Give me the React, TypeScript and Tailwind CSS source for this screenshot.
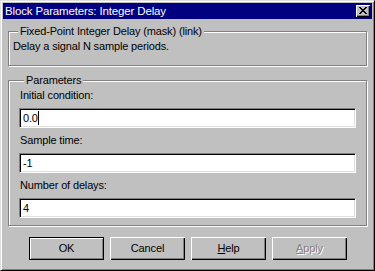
import React from 'react'

const font = "font-['Liberation_Sans',Arial,sans-serif]"

const GroupBox = ({ label, className, children }: { label: string; className?: string; children: React.ReactNode }) => (
  <fieldset
    className={`border border-[#808080] shadow-[inset_1px_1px_0_#fff,1px_1px_0_#fff] ${className ?? ''}`}
  >
    <legend className="ml-[5px] px-[2px] h-[14px] leading-[14px] bg-[#c0c0c0]">{label}</legend>
    {children}
  </fieldset>
)

const Field = ({ label, value, caret }: { label: string; value: string; caret?: boolean }) => (
  <div className="flex flex-col">
    <div className="h-[14px] leading-[14px] pl-[1px]">{label}</div>
    <div className="mt-[6px] h-[20px] border border-t-[#808080] border-l-[#808080] border-r-white border-b-white shadow-[inset_1px_1px_0_#000,inset_-1px_-1px_0_#dfdfdf] bg-white flex items-center pl-[3px]">
      <span className="leading-[14px]">{value}</span>
      {caret && <span className="w-px h-[14px] bg-black" />}
    </div>
  </div>
)

const Button = ({ children, isDefault, disabled }: { children: React.ReactNode; isDefault?: boolean; disabled?: boolean }) => (
  <button
    className={`w-[75px] h-[23px] bg-[#c0c0c0] flex items-center justify-center ${
      isDefault
        ? 'border border-black shadow-[inset_1px_1px_0_#fff,inset_-1px_-1px_0_#808080]'
        : 'shadow-[inset_1px_1px_0_#fff,inset_-1px_-1px_0_#000,inset_-2px_-2px_0_#808080]'
    } ${disabled ? 'text-[#808080] [text-shadow:1px_1px_0_#fff]' : 'text-black'}`}
  >
    {children}
  </button>
)

export default function App() {
  return (
    <div
      className={`w-[375px] h-[271px] bg-[#c0c0c0] text-black text-[11px] tracking-[-0.15px] ${font} border border-t-[#dfdfdf] border-l-[#dfdfdf] border-r-black border-b-black shadow-[inset_1px_1px_0_#fff,inset_-1px_-1px_0_#808080] p-[2px] flex flex-col`}
    >
      <div className="h-[16px] bg-[#000080] flex items-center justify-between pl-[2px] pr-[2px]">
        <span className="text-white text-[11.5px] leading-[16px]">Block Parameters: Integer Delay</span>
        <div className="w-[14px] h-[12px] bg-[#c0c0c0] shadow-[inset_1px_1px_0_#fff,inset_-1px_-1px_0_#000,inset_-2px_-2px_0_#808080] flex items-center justify-center">
          <svg width="8" height="7" viewBox="0 0 8 7" className="-mt-px">
            <path d="M0 0h2v1h1v1h2V1h1V0h2v1H7v1H6v1H5v1h1v1h1v1h1v1H6V6H5V5H3v1H2v1H0V6h1V5h1V4h1V3H2V2H1V1H0z" fill="#000" />
          </svg>
        </div>
      </div>

      <div className="flex-1 px-[5px] flex flex-col">
        <GroupBox label="Fixed-Point Integer Delay (mask) (link)" className="mt-[5px] pt-px pb-[12px] px-[4px]">
          <div className="h-[14px] leading-[14px]">Delay a signal N sample periods.</div>
        </GroupBox>

        <GroupBox label="Parameters" className="mt-[7px] pt-px pb-[7px] pl-[10px] pr-[10px]">
          <div className="flex flex-col gap-[5px]">
            <Field label="Initial condition:" value="0.0" caret />
            <Field label="Sample time:" value="-1" />
            <Field label="Number of delays:" value="4" />
          </div>
        </GroupBox>

        <div className="mt-[11px] pl-[21px] flex gap-[6px]">
          <Button isDefault>OK</Button>
          <Button>Cancel</Button>
          <Button>
            <span><span className="underline">H</span>elp</span>
          </Button>
          <Button disabled>
            <span><span className="underline">A</span>pply</span>
          </Button>
        </div>
      </div>
    </div>
  )
}
